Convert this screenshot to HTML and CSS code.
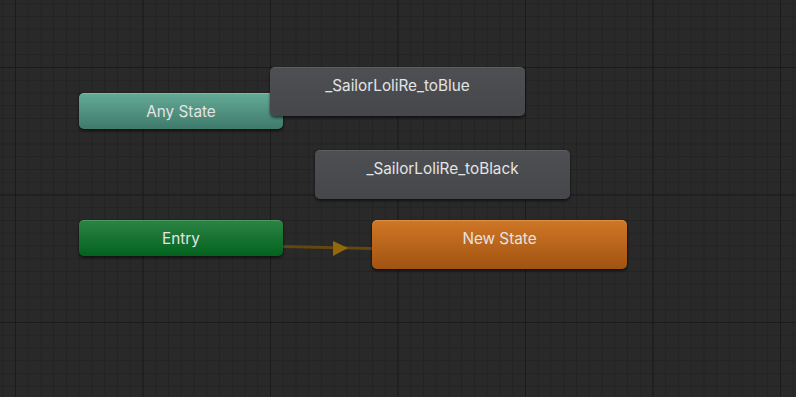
FILE: index.html
```html
<!DOCTYPE html>
<html>
<head>
<meta charset="utf-8">
<link rel="stylesheet" href="styles.css">
</head>
<body>
<div class="canvas">
  <svg class="grid" width="796" height="397" viewBox="0 0 796 397" shape-rendering="crispEdges">
    <defs>
      <pattern id="minor" width="12.75" height="12.75" patternUnits="userSpaceOnUse" x="15" y="67">
        <path d="M0 0.5H12.75M0.5 0V12.75" stroke="#232323" stroke-width="1" fill="none"/>
      </pattern>
      <pattern id="major" width="127.5" height="127.5" patternUnits="userSpaceOnUse" x="15" y="67">
        <path d="M0 0.5H127.5M0.5 0V127.5" stroke="#1b1b1b" stroke-width="1" fill="none"/>
      </pattern>
    </defs>
    <rect width="796" height="397" fill="url(#minor)"/>
    <rect width="796" height="397" fill="url(#major)"/>
  </svg>

  <svg class="links" width="796" height="397" viewBox="0 0 796 397">
    <line x1="283" y1="246.5" x2="372" y2="248.5" stroke="#634610" stroke-width="3"/>
    <polygon points="333,241 348,248 333,256" fill="#93680a"/>
  </svg>

  <div class="node any">Any State</div>
  <div class="node state blue">_SailorLoliRe_toBlue</div>
  <div class="node state black">_SailorLoliRe_toBlack</div>
  <div class="node entry">Entry</div>
  <div class="node state orange">New State</div>
</div>
</body>
</html>
```

FILE: styles.css
```css
html, body {
  margin: 0;
  padding: 0;
  background: #292929;
}

.canvas {
  position: relative;
  width: 796px;
  height: 397px;
  overflow: hidden;
  background: #292929;
  font-family: Inter, "Noto Sans", sans-serif;
}

.grid, .links {
  position: absolute;
  left: 0;
  top: 0;
}

.node {
  position: absolute;
  box-sizing: border-box;
  border-radius: 5px;
  padding-top: 9px;
  line-height: 18px;
  font-size: 15.3px;
  text-align: center;
  color: #e4e4e4;
  box-shadow: 0 2px 3px rgba(0, 0, 0, 0.55), 0 0 1px rgba(0, 0, 0, 0.6);
  white-space: nowrap;
}

.any {
  left: 79px;
  top: 93px;
  width: 204px;
  height: 36px;
  background: linear-gradient(#63a996, #3f7a6b);
  border-top: 1px solid #7bbcab;
}

.entry {
  left: 79px;
  top: 220px;
  width: 204px;
  height: 36px;
  background: linear-gradient(#2b8343, #03621f);
  border-top: 1px solid #4a9a5e;
}

.state {
  width: 255px;
  height: 49px;
  background: linear-gradient(#4e4f53, #46474b);
  border-top: 1px solid #5d5e62;
}

.blue {
  left: 270px;
  top: 67px;
}

.black {
  left: 315px;
  top: 150px;
}

.orange {
  left: 372px;
  top: 220px;
  background: linear-gradient(#cf7626, #a15311);
  border-top: 1px solid #de9049;
}
```
